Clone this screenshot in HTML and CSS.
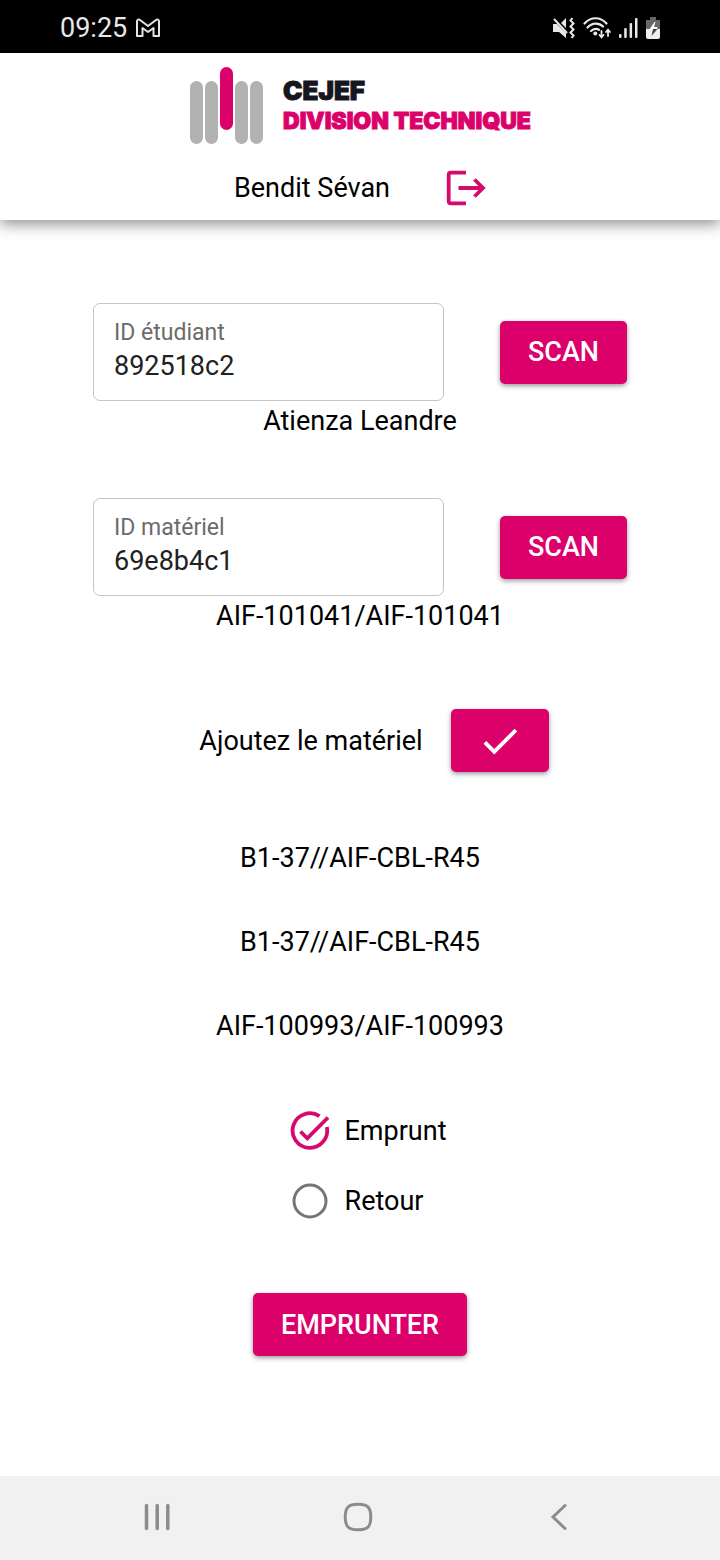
FILE: index.html
```html
<!DOCTYPE html>
<html lang="fr">
<head>
<meta charset="utf-8">
<meta name="viewport" content="width=device-width, initial-scale=1">
<title>CEJEF Division technique</title>
<link rel="stylesheet" href="styles.css">
</head>
<body>
<div class="screen">
  <div class="status">
    <div class="status-side">
      <span>09:25</span>
      <svg width="24" height="20" viewBox="0 0 24 20" fill="none" stroke="#e4e4e4" stroke-width="2" stroke-linejoin="round"><path d="M1 3.200C1 1.600 2.800 1 4 2L12 8L20 2C21.200 1 23 1.600 23 3.200V18H17.500V10L12 14L6.500 10V18H1Z"/></svg>
    </div>
    <div class="status-side status-icons">
      <svg width="22" height="22" viewBox="0 0 22 22"><path fill="#e8e8e8" d="M0 7H4L13 16V21L6 15H0ZM13 1V11L8 6Z"/><path d="M1 2L14 16" fill="none" stroke="#e8e8e8" stroke-width="2"/><path d="M19.500 1L17.500 3.500L20.500 6.500L17.500 9.500L20.500 12.500L17.500 15.500L20.500 18.500L18.500 21" fill="none" stroke="#e8e8e8" stroke-width="2"/></svg>
      <svg width="28" height="22" viewBox="0 0 28 22" fill="none" stroke="#e8e8e8" stroke-width="2.200" stroke-linecap="round"><path d="M1.500 6.500C7.500-.5 17.500-.5 23.500 6.500M4.500 10.500C9 5.500 16 5.500 20 9.500M8 14C10.500 11.500 13.500 11.300 16 12.800"/><circle cx="12.300" cy="16.500" r="2" fill="#e8e8e8" stroke="none"/><path stroke-width="1.800" d="M18.500 14V20M16.500 18L18.500 20.300L20.500 18M25 19V13M23 15L25 12.700L27 15"/></svg>
      <svg width="19" height="22" viewBox="0 0 19 22" fill="#e8e8e8"><rect x="0" y="17" width="2.500" height="4" rx="1"/><rect x="5.200" y="11" width="2.500" height="10" rx="1"/><rect x="10.600" y="6" width="2.500" height="15" rx="1"/><rect x="16" y="1" width="2.500" height="20" rx="1"/></svg>
      <svg class="battery" width="14" height="22" viewBox="0 0 14 22"><path fill="#666" d="M4 0H10V3H14V12H0V3H4Z"/><path fill="#eee" d="M0 12H14V20Q14 22 12 22H2Q0 22 0 20Z"/><path fill="#fff" d="M8.500 5L3 13H7V12H11L11.500 10H8L9.500 5Z"/><path fill="#444" d="M3 12H7L5.500 19L11.500 12H8Z"/></svg>
    </div>
  </div>

  <header class="header">
    <div class="logo">
      <svg width="75" height="77" viewBox="0 0 75 77"><g fill="#b2b2b2"><rect x="1" y="14" width="13" height="63" rx="6.500"/><rect x="16" y="14" width="13" height="63" rx="6.500"/><rect x="46" y="14" width="13" height="63" rx="6.500"/><rect x="61" y="14" width="13" height="63" rx="6.500"/></g><rect x="31" y="0" width="13" height="63" rx="6.500" fill="#dc006b"/></svg>
      <div class="logo-text">
        <span class="logo-name">CEJEF</span>
        <span class="logo-unit">DIVISION TECHNIQUE</span>
      </div>
    </div>
    <div class="user">
      <span>Bendit Sévan</span>
      <button class="logout" type="button" aria-label="Se déconnecter">
        <svg width="40" height="36" viewBox="0 0 40 36" fill="none" stroke="#d6096c" stroke-width="3.800"><path d="M20 2.700H5Q2.700 2.700 2.700 5V31Q2.700 33.300 5 33.300H20M12.500 18H36M28.500 9.500L37 18L28.500 26.500"/></svg>
      </button>
    </div>
  </header>

  <main class="main">
    <form class="form">
      <section class="entry">
        <div class="entry-row">
          <label class="field"><span class="field-label">ID étudiant</span><input class="field-input" type="text" value="892518c2"></label>
          <button class="btn" type="button">SCAN</button>
        </div>
        <p class="entry-note">Atienza Leandre</p>
      </section>
      <section class="entry">
        <div class="entry-row">
          <label class="field"><span class="field-label">ID matériel</span><input class="field-input" type="text" value="69e8b4c1"></label>
          <button class="btn" type="button">SCAN</button>
        </div>
        <p class="entry-note">AIF-101041/AIF-101041</p>
      </section>

      <div class="add">
        <span>Ajoutez le matériel</span>
        <button class="btn" type="button" aria-label="Ajouter">
          <svg width="46" height="46" viewBox="0 0 24 24" fill="#fff"><path d="M9 16.170L4.830 12l-1.420 1.410L9 19 21 7l-1.410-1.410z"/></svg>
        </button>
      </div>

      <ul class="items">
        <li>B1-37//AIF-CBL-R45</li>
        <li>B1-37//AIF-CBL-R45</li>
        <li>AIF-100993/AIF-100993</li>
      </ul>

      <div class="choices">
        <label class="choice">
          <input class="choice-input" type="radio" name="mode" checked>
          <svg class="choice-on" width="42" height="42" viewBox="0 0 42 42" fill="none" stroke="#d6096c" stroke-width="3.800"><path d="M30.500 6.200A17.300 17.300 0 1 0 37.800 17"/><path d="M11.500 21.500L18.300 28.300L39 7.500"/></svg>
          <svg class="choice-off" width="42" height="42" viewBox="0 0 42 42" fill="none" stroke="#757575" stroke-width="3"><circle cx="21" cy="21" r="16"/></svg>
          <span>Emprunt</span>
        </label>
        <label class="choice">
          <input class="choice-input" type="radio" name="mode">
          <svg class="choice-on" width="42" height="42" viewBox="0 0 42 42" fill="none" stroke="#d6096c" stroke-width="3.800"><path d="M30.500 6.200A17.300 17.300 0 1 0 37.800 17"/><path d="M11.500 21.500L18.300 28.300L39 7.500"/></svg>
          <svg class="choice-off" width="42" height="42" viewBox="0 0 42 42" fill="none" stroke="#757575" stroke-width="3"><circle cx="21" cy="21" r="16"/></svg>
          <span>Retour</span>
        </label>
      </div>

      <button class="btn" type="submit">EMPRUNTER</button>
    </form>
  </main>

  <nav class="nav">
    <button class="nav-btn" type="button" aria-label="Applications récentes"><svg width="30" height="30" viewBox="0 0 30 30" fill="none" stroke="#8c8c8c" stroke-width="3.500" stroke-linecap="round"><path d="M4.500 3.500V26.500M15.200 3.500V26.500M25.800 3.500V26.500"/></svg></button>
    <button class="nav-btn" type="button" aria-label="Accueil"><svg width="30" height="30" viewBox="0 0 30 30" fill="none" stroke="#8c8c8c" stroke-width="3"><path d="M15 2.200C24.500 2.200 27.800 5 27.800 15S24.500 27.800 15 27.800S2.200 24.500 2.200 15S5.500 2.200 15 2.200Z"/></svg></button>
    <button class="nav-btn" type="button" aria-label="Retour"><svg width="30" height="30" viewBox="0 0 30 30" fill="none" stroke="#8c8c8c" stroke-width="3" stroke-linecap="round"><path d="M21 3.500L9 15L21 26.500"/></svg></button>
  </nav>
</div>
</body>
</html>
```
FILE: styles.css
```css
* { box-sizing: border-box; }
body { margin: 0; background: #fff; color: #000; font: 27px/40px Roboto, "Liberation Sans", sans-serif; }
button { font: inherit; border: 0; cursor: pointer; }
svg { display: block; flex: none; }
.screen { display: flex; flex-direction: column; min-height: 100vh; }

.status { display: flex; justify-content: space-between; align-items: center; padding: 8px 60px 5px; background: #000; color: #e8e8e8; }
.status-side { display: flex; align-items: center; gap: 9px; }
.status-icons { gap: 8px; }

.header { position: relative; display: flex; flex-direction: column; align-items: center; gap: 24px; padding: 14px 16px 12px; background: #fff; box-shadow: 0 4px 14px rgba(0, 0, 0, .45); }
.logo { display: flex; gap: 19px; }
.logo-text { display: flex; flex-direction: column; padding-top: 8px; font-family: Inter, Roboto, sans-serif; font-weight: 900; line-height: 31px; white-space: nowrap; -webkit-text-stroke: 1px currentColor; }
.logo-name { color: #16161f; font-size: 26px; }
.logo-unit { color: #dc006b; font-size: 23px; }
.user { display: flex; align-items: center; gap: 56px; }
.logout { padding: 2px 0; background: none; }

.main { flex: 1; padding: 83px 16px 40px; }
.form { display: flex; flex-direction: column; align-items: center; }
.entry { width: 100%; max-width: 534px; margin-bottom: 57px; }
.entry-row { display: flex; align-items: center; justify-content: space-between; gap: 56px; }
.entry-note { margin: 0; text-align: center; }
.field { flex: 1; min-width: 0; display: flex; flex-direction: column; padding: 15px 20px 17px; border: 1px solid #c4c4c4; border-radius: 7px; }
.field-label { color: #6b6b6b; font-size: 23px; line-height: 28px; }
.field-input { width: 100%; height: 36px; padding: 2px 0 0; border: 0; outline: 0; background: none; color: #212121; font: inherit; }
.btn { display: flex; align-items: center; justify-content: center; min-width: 98px; min-height: 63px; padding: 0 28px; border-radius: 5px; background: #dc006b; color: #fff; font-weight: 500; box-shadow: 0 2px 5px rgba(0, 0, 0, .4); }

.add { display: flex; align-items: center; gap: 28px; margin-top: 16px; padding-left: 28px; }
.add .btn { padding: 0 26px; }
.items { display: flex; flex-direction: column; gap: 44px; margin: 66px 0 0; padding: 0; list-style: none; text-align: center; }
.choices { display: flex; flex-direction: column; gap: 28px; margin: 64px 0 71px; padding-left: 15px; }
.choice { position: relative; display: flex; align-items: center; gap: 14px; }
.choice-input { position: absolute; width: 42px; height: 42px; margin: 0; opacity: 0; }
.choice-on, .choice-input:checked ~ .choice-off { display: none; }
.choice-input:checked ~ .choice-on { display: block; }

.nav { display: flex; padding: 0 60px 0 56px; background: #f1f1f1; }
.nav-btn { flex: 1; display: flex; justify-content: center; padding: 26px 0 28px; background: none; }
```
